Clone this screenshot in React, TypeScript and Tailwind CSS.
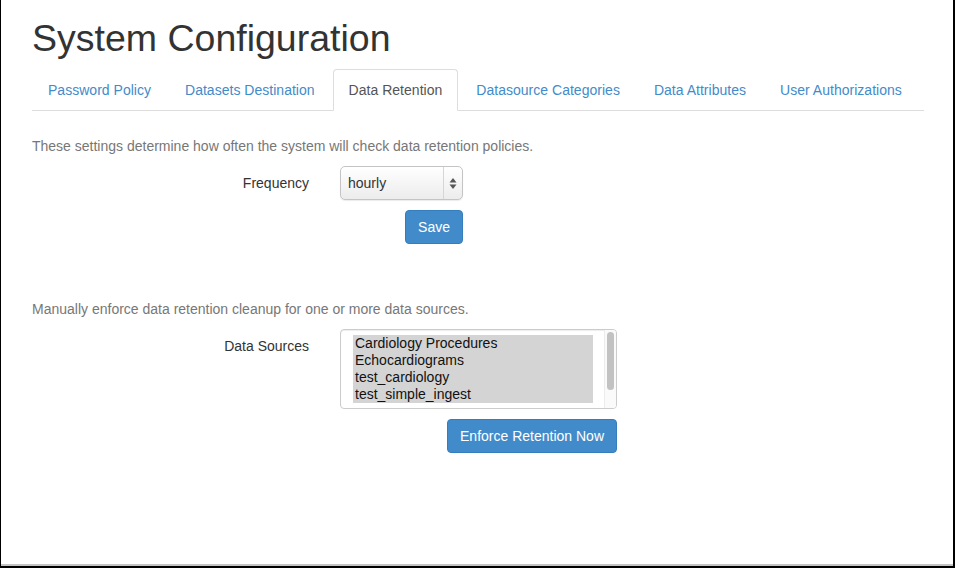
import React from 'react';

// --- small pieces ---

const tabs = [
  'Password Policy',
  'Datasets Destination',
  'Data Retention',
  'Datasource Categories',
  'Data Attributes',
  'User Authorizations',
];

const sources = [
  'Cardiology Procedures',
  'Echocardiograms',
  'test_cardiology',
  'test_simple_ingest',
];

// up/down arrows of the native select
const SelectArrows = () => (
  <svg width="8" height="13" viewBox="0 0 8 13" className="block">
    <path d="M4 1 L7.5 5.5 H0.5 Z" fill="#555" />
    <path d="M4 12 L7.5 7.5 H0.5 Z" fill="#555" />
  </svg>
);

const Label = ({ children }: { children: React.ReactNode }) => (
  <div className="w-[292px] shrink-0 pr-[15px] pt-[7px] text-right text-[14px] leading-[20px] text-[#333]">
    {children}
  </div>
);

const BlueButton = ({ children }: { children: React.ReactNode }) => (
  <button className="h-[34px] px-[12px] rounded-[4px] border border-[#357ebd] bg-[#428bca] text-white text-[14px] leading-[20px] whitespace-nowrap">
    {children}
  </button>
);

// --- MAIN ---
export default function App() {
  return (
    <div className="w-[955px] h-[568px] flex flex-col bg-white border-l border-r-2 border-b-2 border-black overflow-hidden font-['Liberation_Sans',Arial,sans-serif]">
      <div className="flex-1 pl-[31px]">
        <div className="w-[892px]">
          <h1 className="mt-[18px] mb-[10px] text-[37.5px] leading-[1.1] font-medium text-[#333]">
            System Configuration
          </h1>

          {/* tabs */}
          <ul className="flex border-b border-[#ddd]">
            {tabs.map((t) => {
              const active = t === 'Data Retention';
              return (
                <li key={t} className="mr-[2px] -mb-px shrink-0">
                  <a
                    className={`block whitespace-nowrap px-[15px] py-[10px] text-[14px] leading-[20px] tracking-[0.02px] rounded-t-[4px] border ${
                      active
                        ? 'bg-white text-[#555] border-[#ddd] border-b-transparent'
                        : 'text-[#428bca] border-transparent'
                    }`}
                  >
                    {t}
                  </a>
                </li>
              );
            })}
          </ul>

          {/* frequency */}
          <p className="mt-[25px] mb-[10px] text-[14px] leading-[20px] text-[#777]">
            These settings determine how often the system will check data retention policies.
          </p>
          <div className="flex">
            <Label>Frequency</Label>
            <div className="ml-[16px] w-[123px] flex flex-col items-end">
              <div className="w-full h-[34px] flex items-center rounded-[5px] border border-[#c4c4c4] bg-[linear-gradient(#ffffff,#ececec)] shadow-[0_1px_1px_rgba(0,0,0,0.08)]">
                <span className="flex-1 pl-[7px] text-[14px] text-[#333]">hourly</span>
                <div className="h-full w-[19px] border-l border-[#d6d6d6] flex items-center justify-center">
                  <SelectArrows />
                </div>
              </div>
              <div className="mt-[10px]">
                <BlueButton>Save</BlueButton>
              </div>
            </div>
          </div>

          {/* data sources */}
          <p className="mt-[55px] mb-[10px] text-[14px] leading-[20px] text-[#777]">
            Manually enforce data retention cleanup for one or more data sources.
          </p>
          <div className="flex">
            <Label>Data Sources</Label>
            <div className="ml-[16px] w-[277px] flex flex-col items-end">
              <div className="w-full h-[80px] flex rounded-[4px] border border-[#ccc] shadow-[inset_0_1px_1px_rgba(0,0,0,0.075)] overflow-hidden">
                <div className="flex-1 pl-[12px] pt-[5px]">
                  <div className="w-[240px] bg-[#d4d4d4]">
                    {sources.map((s) => (
                      <div key={s} className="px-[2px] text-[14px] leading-[17px] text-[#111]">
                        {s}
                      </div>
                    ))}
                  </div>
                </div>
                <div className="w-[12px] h-full border-l border-[#ececec] bg-[#fafafa] pt-[2px] pl-[2px]">
                  <div className="w-[7px] h-[58px] rounded-full bg-[#c2c2c2]" />
                </div>
              </div>
              <div className="mt-[10px]">
                <BlueButton>Enforce Retention Now</BlueButton>
              </div>
            </div>
          </div>
        </div>
      </div>
      <div className="h-[2px] bg-[#c4c4c4]" />
    </div>
  );
}
